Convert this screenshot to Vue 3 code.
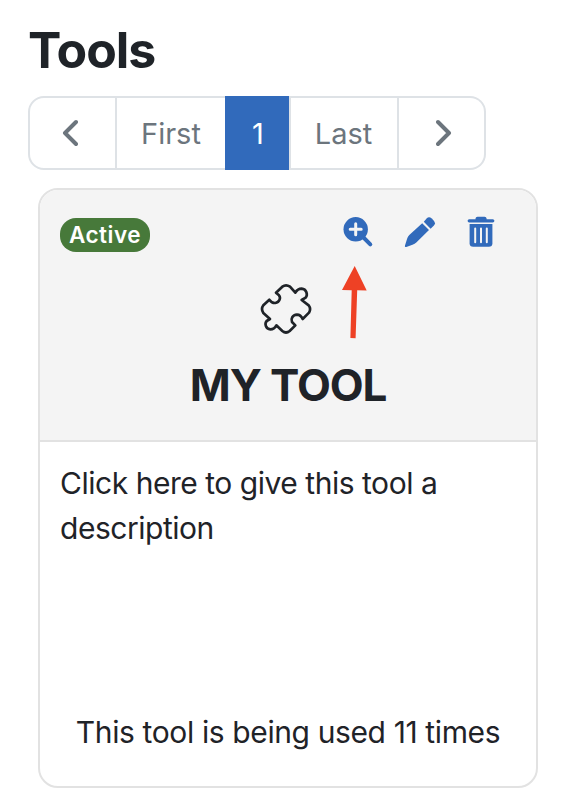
<script setup>
const tool = {
  name: 'MY TOOL',
  status: 'Active',
  description: ['Click here to give this tool a', 'description'],
  usage: 'This tool is being used 11 times',
}
</script>

<template>
  <main class="page">
    <h1 class="title">Tools</h1>

    <nav class="pagination">
      <a class="item prev">
        <svg width="16" height="28" viewBox="0 0 16 28"><path d="M14 3 3 14 14 25" /></svg>
      </a>
      <a class="item first">First</a>
      <a class="item current">1</a>
      <a class="item last">Last</a>
      <a class="item next">
        <svg width="16" height="28" viewBox="0 0 16 28"><path d="M2 3 13 14 2 25" /></svg>
      </a>
    </nav>

    <section class="card">
      <header class="head">
        <div class="toolbar">
          <span class="badge">{{ tool.status }}</span>
          <div class="actions">
            <svg class="action" width="32" height="32" viewBox="0 0 32 32">
              <path class="handle" d="M21 21 28.3 28.3" />
              <circle cx="13.7" cy="13.3" r="12.2" />
              <path class="plus" d="M13.7 7.8v11M8.2 13.3h11" />
            </svg>
            <svg class="action" width="32" height="32" viewBox="0 0 32 32">
              <path d="M18.2 7.3 25 14.1 12.3 26.5Q10.8 28 8.5 28.7L2.3 30.9Q.4 31.5 1 29.4L3.1 22.7Q3.7 20.7 5.3 19.1Z" />
              <path d="M19.8 5.7 22.6 2.5Q25-.1 27.8 2.6L29.6 4.5Q32.2 7.3 29.7 9.8L26.6 12.7Z" />
            </svg>
            <svg class="action" width="32" height="32" viewBox="0 0 32 32">
              <path d="M9.5 3.2V2.5Q9.7.8 11.5.8h7.1Q20.4.8 20.6 2.5v.7h6.2a1.5 1.5 0 0 1 0 3.2H3.2a1.5 1.5 0 0 1 0-3.2Z" />
              <path d="M3.6 8h22.8v19.2q0 3.6-3.6 3.6H7.2q-3.6 0-3.6-3.6Z" />
              <path class="slots" d="M9.2 12.5v13.7M15 12.5v13.7M20.8 12.5v13.7" />
            </svg>
          </div>
        </div>

        <svg class="puzzle" width="54" height="54" viewBox="59 37 162 162">
          <path d="M110 69 129 51Q140 43 152 51L168 69Q175 57 187 57C202 58 206 76 199 84L187 91 208 107Q216 118 209 129L190 148C186 139 180 135 173 135C159 136 154 147 158 157L168 167 151 184Q140 193 129 184L111 167Q105 179 93 179C79 178 75 162 82 154L92 148 72 130Q64 118 72 107L90 90Q98 101 108 100C121 98 125 84 119 77Z" />
        </svg>
        <h2 class="name">{{ tool.name }}</h2>

        <svg class="arrow" width="28" height="76" viewBox="0 0 28 76">
          <path d="M14.7 2 26.7 26.6 17.2 26.3 15.6 74.2 10.4 74 11.7 26.2 2 26Z" />
        </svg>
      </header>

      <div class="body">
        <p class="description">
          <span v-for="line in tool.description" :key="line" class="line">{{ line }}</span>
        </p>
        <p class="usage">{{ tool.usage }}</p>
      </div>
    </section>
  </main>
</template>

<style>
body {
  margin: 0;
  background: #fff;
}
</style>

<style scoped>
.page {
  box-sizing: border-box;
  width: 586px;
  height: 812px;
  padding: 20px 48px 0 28px;
  overflow: hidden;
  color: #1f2328;
  font-family: Inter, "Liberation Sans", sans-serif;
  font-size: 30px;
}
.title {
  height: 60px;
  margin: 0 0 16px;
  font-size: 50px;
  line-height: 60px;
  font-weight: 700;
  letter-spacing: -1px;
}
.pagination {
  box-sizing: border-box;
  display: flex;
  width: 458px;
  height: 74px;
}
.item {
  box-sizing: border-box;
  display: flex;
  align-items: center;
  justify-content: center;
  border: 2px solid #dee2e6;
  border-left-width: 0;
  color: #6c757d;
  font-size: 29px;
}
.item path {
  fill: none;
  stroke: #6c757d;
  stroke-width: 4;
  stroke-linecap: round;
  stroke-linejoin: round;
}
.prev {
  width: 89px;
  padding-right: 5px;
  border-left-width: 2px;
  border-radius: 16px 0 0 16px;
}
.first {
  width: 108px;
  border-right: 0;
}
.current {
  width: 64px;
  padding-left: 4px;
  border-color: #316abb;
  background: #316abb;
  color: #fff;
}
.last {
  width: 110px;
  padding-right: 1px;
  border-left-width: 2px;
}
.next {
  width: 87px;
  padding-left: 4px;
  border-radius: 0 16px 16px 0;
}
.card {
  box-sizing: border-box;
  display: flex;
  flex-direction: column;
  width: 500px;
  height: 600px;
  margin: 18px 0 0 10px;
  overflow: hidden;
  border: 2px solid #e2e2e2;
  border-radius: 20px;
}
.head {
  position: relative;
  box-sizing: border-box;
  display: flex;
  flex-direction: column;
  align-items: center;
  height: 252px;
  border-bottom: 2px solid #e2e2e2;
  background: #f4f4f4;
}
.toolbar {
  box-sizing: border-box;
  display: flex;
  justify-content: space-between;
  width: 100%;
  padding: 26px 38px 0 20px;
}
.badge {
  box-sizing: border-box;
  width: 90px;
  height: 34px;
  margin-top: 2px;
  border-radius: 16px;
  background: #47793a;
  color: #fff;
  font-size: 22.5px;
  line-height: 34px;
  font-weight: 600;
  letter-spacing: 0.5px;
  text-align: center;
}
.actions {
  display: flex;
  gap: 30px;
}
.action {
  fill: #316abb;
}
.handle {
  stroke: #316abb;
  stroke-width: 4;
  stroke-linecap: round;
}
.plus {
  stroke: #f4f4f4;
  stroke-width: 3;
  stroke-linecap: round;
}
.slots {
  stroke: #f4f4f4;
  stroke-width: 2;
  stroke-linecap: round;
}
.puzzle {
  margin: 30px 0 0 -4px;
  fill: none;
  stroke: #1f2328;
  stroke-width: 8;
  stroke-linejoin: round;
}
.name {
  margin: 21px 0 0;
  font-size: 44px;
  line-height: 56px;
  font-weight: 700;
  letter-spacing: -1.1px;
}
.arrow {
  position: absolute;
  top: 74px;
  left: 300px;
  fill: #ee4125;
}
.body {
  display: flex;
  flex: 1;
  flex-direction: column;
  justify-content: space-between;
  padding: 19px 20px 31px;
}
.description,
.usage {
  margin: 0;
  line-height: 45px;
  letter-spacing: -0.47px;
  white-space: nowrap;
}
.line {
  display: block;
}
.usage {
  letter-spacing: -0.38px;
  text-align: center;
}
</style>
